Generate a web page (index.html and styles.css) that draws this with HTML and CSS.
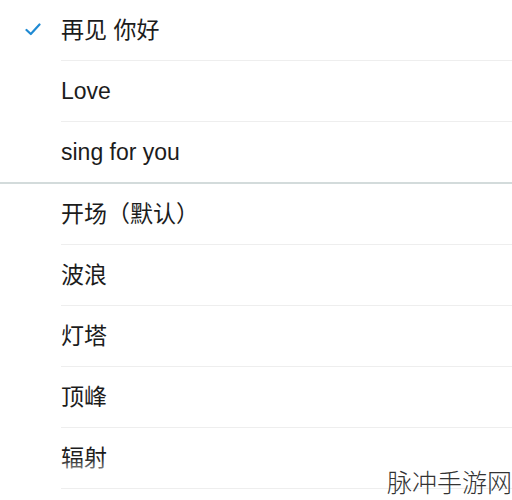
FILE: index.html
```html
<!DOCTYPE html>
<html>
<head>
<meta charset="utf-8">
<link rel="stylesheet" href="styles.css">
</head>
<body>
<div class="screen">
  <ul class="list">
    <li class="row selected">
      <span class="check"><svg width="16" height="13" viewBox="0 0 16 13"><path d="M1.5 7 L5.8 11 L14.5 1.5" fill="none" stroke="#1f8ad3" stroke-width="2.2" stroke-linecap="round" stroke-linejoin="round"/></svg></span>
      <span class="label">再见 你好</span>
    </li>
    <li class="row"><span class="label">Love</span></li>
    <li class="row group-end"><span class="label">sing for you</span></li>
    <li class="row"><span class="label">开场（默认）</span></li>
    <li class="row"><span class="label">波浪</span></li>
    <li class="row"><span class="label">灯塔</span></li>
    <li class="row"><span class="label">顶峰</span></li>
    <li class="row"><span class="label">辐射</span></li>
  </ul>
  <div class="fade"></div>
  <div class="watermark">脉冲手游网</div>
</div>
</body>
</html>
```
FILE: styles.css
```css
html, body {
  margin: 0;
  padding: 0;
  background: #ffffff;
}
.screen {
  position: relative;
  width: 512px;
  height: 500px;
  overflow: hidden;
  font-family: "Liberation Sans", "Noto Sans CJK SC", sans-serif;
}
.list {
  list-style: none;
  margin: 0;
  padding: 0;
}
.row {
  position: relative;
  height: 60px;
  display: flex;
  align-items: center;
  padding-left: 61px;
  margin-bottom: 1px;
}
.row::before {
  content: "";
  position: absolute;
  left: 61px;
  right: 0;
  bottom: -1px;
  height: 1px;
  background: #eeeeee;
}
.row.group-end {
  margin-bottom: 2px;
}
.row.group-end::before {
  left: 0;
  height: 2px;
  bottom: -2px;
  background: #d3dbdb;
}
.label {
  font-size: 23px;
  color: #1c1c1c;
  line-height: 1;
}
.check {
  position: absolute;
  left: 25px;
  top: 23px;
  width: 16px;
  height: 13px;
  display: block;
}
.check svg {
  display: block;
}
.fade {
  position: absolute;
  left: 0;
  right: 0;
  top: 458px;
  height: 14px;
  background: linear-gradient(rgba(255,255,255,0), rgba(255,255,255,0.55));
}
.watermark {
  position: absolute;
  right: 0;
  top: 469px;
  font-family: "Noto Sans CJK SC", sans-serif;
  font-weight: 300;
  font-size: 25px;
  line-height: 1;
  color: #333333;
}
```
